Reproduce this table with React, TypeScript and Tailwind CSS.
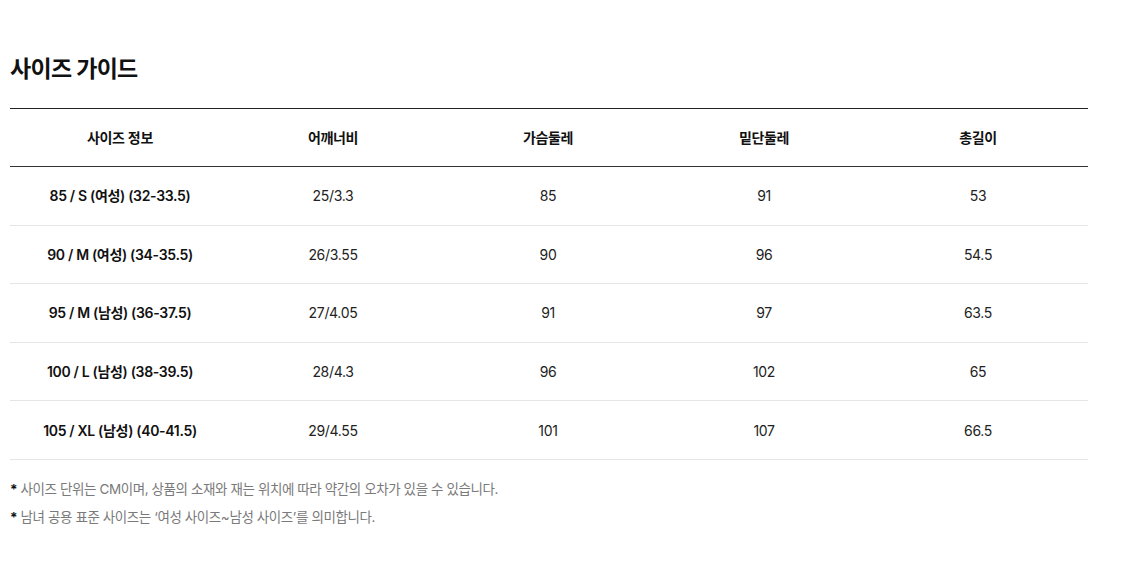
const headers = ['사이즈 정보', '어깨너비', '가슴둘레', '밑단둘레', '총길이'];

// column widths read off the reference (auto table layout)
const widths = ['w-[220px]', 'w-[206px]', 'w-[224px]', 'w-[208px]', 'w-[220px]'];

const rows = [
  ['85 / S (여성) (32-33.5)', '25/3.3', '85', '91', '53'],
  ['90 / M (여성) (34-35.5)', '26/3.55', '90', '96', '54.5'],
  ['95 / M (남성) (36-37.5)', '27/4.05', '91', '97', '63.5'],
  ['100 / L (남성) (38-39.5)', '28/4.3', '96', '102', '65'],
  ['105 / XL (남성) (40-41.5)', '29/4.55', '101', '107', '66.5'],
];

const notes = [
  '사이즈 단위는 CM이며, 상품의 소재와 재는 위치에 따라 약간의 오차가 있을 수 있습니다.',
  '남녀 공용 표준 사이즈는 ‘여성 사이즈~남성 사이즈’를 의미합니다.',
];

export default function App() {
  return (
    <div
      className="min-h-screen bg-white pl-[10px] pt-[53px] text-[#111] tracking-[-0.02em]"
      style={{ fontFamily: 'Inter, "Noto Sans CJK KR", sans-serif' }}
    >
      <div className="w-[1078px]">
        <h2 className="text-[23px] font-bold leading-[32px] tracking-[-0.03em] text-[#111]">사이즈 가이드</h2>

        <div className="mt-[23px] border-t border-[#222]">
          {/* Header */}
          <div className="flex h-[58px] items-center border-b border-[#333]">
            {headers.map((h, j) => (
              <div key={h} className={`${widths[j]} text-center text-[14px] font-semibold`}>
                {h}
              </div>
            ))}
          </div>

          {/* Body */}
          {rows.map((r, i) => (
            <div key={i} className="flex h-[58.6px] items-center border-b border-[#e6e6e6]">
              {r.map((c, j) => (
                <div
                  key={j}
                  className={`${widths[j]} text-center text-[14px] ${j === 0 ? 'font-semibold' : 'text-[#222]'}`}
                >
                  {c}
                </div>
              ))}
            </div>
          ))}
        </div>

        <ul className="mt-[15px]">
          {notes.map((n) => (
            <li key={n} className="text-[13.5px] leading-[28px] tracking-[-0.03em] text-[#7a7a7a]">
              <span className="font-bold text-[#111]">*</span> {n}
            </li>
          ))}
        </ul>
      </div>
    </div>
  );
}
